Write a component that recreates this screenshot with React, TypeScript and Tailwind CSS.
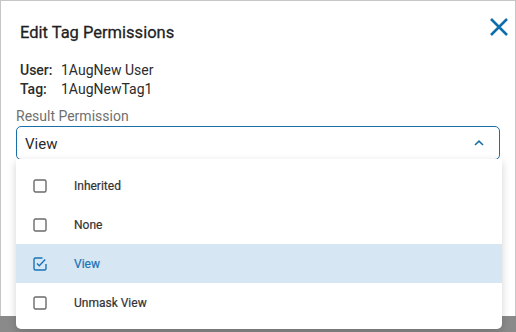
import { useState } from "react";

const options = ["Inherited", "None", "View", "Unmask View"];

const Checkbox = ({ checked }: { checked: boolean }) =>
  checked ? (
    <svg width="14" height="14" viewBox="0 0 14 14" className="shrink-0">
      <path d="M9.5 1 H2.5 A1.5 1.5 0 0 0 1 2.5 V11.5 A1.5 1.5 0 0 0 2.5 13 H11.5 A1.5 1.5 0 0 0 13 11.5 V7" fill="none" stroke="#1a73b8" strokeWidth="1.4" />
      <path d="M4 6.5 L6.3 8.8 L12.2 2.6" fill="none" stroke="#1a73b8" strokeWidth="1.4" />
    </svg>
  ) : (
    <svg width="14" height="14" viewBox="0 0 14 14" className="shrink-0">
      <rect x="1" y="1" width="12" height="12" rx="1.5" fill="none" stroke="#6b6b6b" strokeWidth="1.4" />
    </svg>
  );

export default function App() {
  const [value, setValue] = useState("View");

  return (
    <div
      className="relative w-[516px] h-[332px] bg-[#8a8a8a] overflow-hidden"
      style={{ fontFamily: "Roboto, 'Liberation Sans', sans-serif" }}
    >
      <div className="h-[316px] bg-white border border-b-0 border-[#c6c6c6] px-[15px] pt-[22px]">
        <div className="flex items-start justify-between">
          <h2 className="pl-1 text-[16.5px] font-normal text-[#1f1f1f] leading-5 [-webkit-text-stroke:0.3px_#1f1f1f]">
            Edit Tag Permissions
          </h2>
          <button className="-mt-[7px] mr-[-10px] text-[#0d6eaa]">
            <svg width="22" height="22" viewBox="0 0 22 22">
              <path d="M3 3 L19 19 M19 3 L3 19" stroke="currentColor" strokeWidth="2.5" fill="none" />
            </svg>
          </button>
        </div>

        <div className="mt-[18px] pl-1 text-[14px] leading-[19px] text-[#2b2b2b]">
          <div className="flex">
            <span className="w-[41px] font-medium">User:</span>
            <span>1AugNew User</span>
          </div>
          <div className="flex">
            <span className="w-[41px] font-medium">Tag:</span>
            <span>1AugNewTag1</span>
          </div>
        </div>

        <div className="mt-[9px] text-[14px] text-[#707070] leading-[17px]">Result Permission</div>
        <div className="mt-[1px] h-[34px] rounded-[5px] border border-[#1a6fa8] flex items-center justify-between pl-[8px] pr-[14px]">
          <span className="text-[15px] text-[#2b2b2b] pt-[2px]">{value}</span>
          <svg width="12" height="8" viewBox="0 0 12 8">
            <path d="M2 6 L6 2.2 L10 6" stroke="#1a6fa8" strokeWidth="1.6" fill="none" />
          </svg>
        </div>
      </div>

      <ul className="absolute left-[16px] top-[159px] w-[486px] bg-white rounded-b-[5px] py-[7px] shadow-[0_3px_8px_rgba(0,0,0,0.18)]">
        {options.map((o) => {
          const sel = o === value;
          return (
            <li
              key={o}
              onClick={() => setValue(o)}
              className={`h-[39px] flex items-center gap-[27px] pl-[17px] cursor-pointer text-[12px] font-normal [-webkit-text-stroke:0.2px_currentColor] ${
                sel ? "bg-[#d6e6f2] text-[#1a73b8]" : "text-[#333333]"
              }`}
            >
              <Checkbox checked={sel} />
              <span>{o}</span>
            </li>
          );
        })}
      </ul>
    </div>
  );
}
